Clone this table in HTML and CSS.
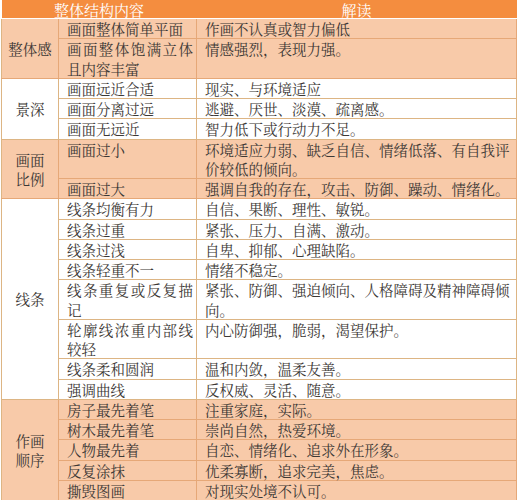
FILE: index.html
```html
<!DOCTYPE html>
<html lang="zh-CN">
<head>
<meta charset="utf-8">
<link rel="stylesheet" href="styles.css">
</head>
<body>
<table class="tbl">
  <colgroup><col class="c1"><col class="c2"><col class="c3"></colgroup>
  <thead>
    <tr class="head"><th colspan="2">整体结构内容</th><th>解读</th></tr>
  </thead>
  <tbody class="peach">
    <tr><td class="cat" rowspan="2">整体感</td><td class="item">画面整体简单平面</td><td class="desc">作画不认真或智力偏低</td></tr>
    <tr><td class="item">画面整体饱满立体且内容丰富</td><td class="desc">情感强烈，表现力强。</td></tr>
  </tbody>
  <tbody class="white">
    <tr><td class="cat" rowspan="3">景深</td><td class="item">画面远近合适</td><td class="desc">现实、与环境适应</td></tr>
    <tr><td class="item">画面分离过远</td><td class="desc">逃避、厌世、淡漠、疏离感。</td></tr>
    <tr><td class="item">画面无远近</td><td class="desc">智力低下或行动力不足。</td></tr>
  </tbody>
  <tbody class="peach">
    <tr><td class="cat" rowspan="2">画面<br>比例</td><td class="item">画面过小</td><td class="desc">环境适应力弱、缺乏自信、情绪低落、有自我评价较低的倾向。</td></tr>
    <tr><td class="item">画面过大</td><td class="desc">强调自我的存在，攻击、防御、躁动、情绪化。</td></tr>
  </tbody>
  <tbody class="white">
    <tr><td class="cat" rowspan="8">线条</td><td class="item">线条均衡有力</td><td class="desc">自信、果断、理性、敏锐。</td></tr>
    <tr><td class="item">线条过重</td><td class="desc">紧张、压力、自满、激动。</td></tr>
    <tr><td class="item">线条过浅</td><td class="desc">自卑、抑郁、心理缺陷。</td></tr>
    <tr><td class="item">线条轻重不一</td><td class="desc">情绪不稳定。</td></tr>
    <tr><td class="item">线条重复或反复描记</td><td class="desc">紧张、防御、强迫倾向、人格障碍及精神障碍倾向。</td></tr>
    <tr><td class="item">轮廓线浓重内部线较轻</td><td class="desc">内心防御强，脆弱，渴望保护。</td></tr>
    <tr><td class="item">线条柔和圆润</td><td class="desc">温和内敛，温柔友善。</td></tr>
    <tr><td class="item">强调曲线</td><td class="desc">反权威、灵活、随意。</td></tr>
  </tbody>
  <tbody class="peach">
    <tr><td class="cat" rowspan="5">作画<br>顺序</td><td class="item">房子最先着笔</td><td class="desc">注重家庭，实际。</td></tr>
    <tr><td class="item">树木最先着笔</td><td class="desc">崇尚自然，热爱环境。</td></tr>
    <tr><td class="item">人物最先着</td><td class="desc">自恋、情绪化、追求外在形象。</td></tr>
    <tr><td class="item">反复涂抹</td><td class="desc">优柔寡断，追求完美，焦虑。</td></tr>
    <tr><td class="item">撕毁图画</td><td class="desc">对现实处境不认可。</td></tr>
  </tbody>
</table>
</body>
</html>
```
FILE: styles.css
```css
html, body {
  margin: 0;
  padding: 0;
  background: #ffffff;
}
body {
  font-family: "Noto Serif CJK SC", "Noto Sans CJK SC", serif;
  color: #3c3835;
}
.tbl {
  margin-left: 1px;
  width: 515px;
  border-collapse: collapse;
  table-layout: fixed;
  font-size: 14.5px;
  line-height: 19.25px;
}
.c1 { width: 57px; }
.c2 { width: 138px; }
.c3 { width: 320px; }
.head th {
  background: #f48d3f;
  color: #ffffff;
  font-weight: normal;
  font-size: 15px;
  height: 17px;
  line-height: 17px;
  padding: 1px 0 0 0;
  text-align: center;
  border-bottom: 1px solid #ffffff;
}
td {
  padding: 0;
  border: 1px solid #ddb584;
  vertical-align: top;
}
.cat {
  text-align: center;
  vertical-align: middle;
  padding: 0 4px;
}
.item {
  padding: 0 3px 0 8px;
  text-align: justify;
  text-align-last: left;
}
.desc {
  padding: 0 4px 0 8px;
}
.peach td {
  background: #f8caa9;
  border-color: #e6a878;
}
.white td {
  background: #ffffff;
}
.peach .cat, .white .cat {
  border-left-color: #ddb584;
}
```
